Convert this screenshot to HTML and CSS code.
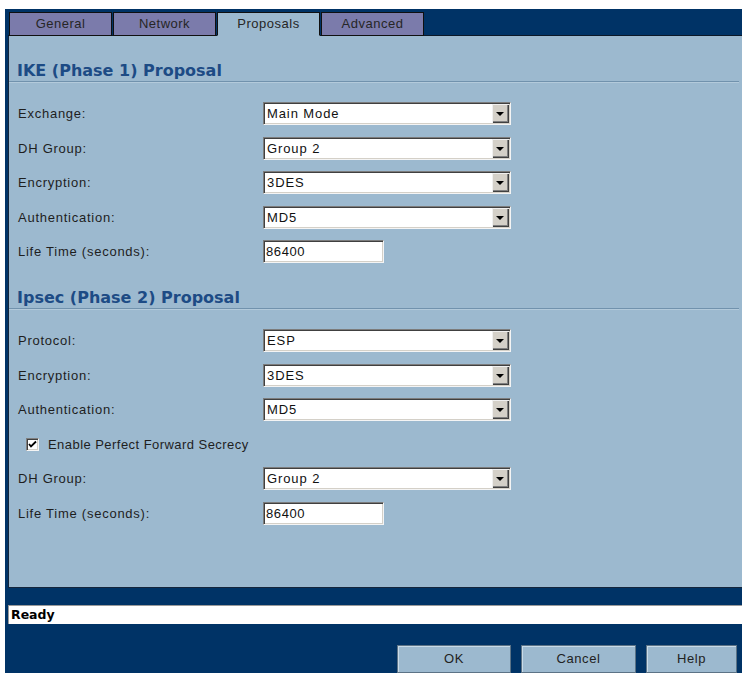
FILE: index.html
```html
<!DOCTYPE html>
<html lang="en">
<head>
<meta charset="utf-8">
<title>Proposals</title>
<link rel="stylesheet" href="styles.css">
</head>
<body>
<div class="app">
  <div class="tabs">
    <div class="tab">General</div>
    <div class="tab">Network</div>
    <div class="tab active">Proposals</div>
    <div class="tab">Advanced</div>
  </div>

  <div class="panel">
    <section class="section">
      <h2 class="section-title">IKE (Phase 1) Proposal</h2>
      <div class="rows">
        <div class="row"><span class="label">Exchange:</span><div class="select"><span class="value">Main Mode</span><span class="drop"></span></div></div>
        <div class="row"><span class="label">DH Group:</span><div class="select"><span class="value">Group 2</span><span class="drop"></span></div></div>
        <div class="row"><span class="label">Encryption:</span><div class="select"><span class="value">3DES</span><span class="drop"></span></div></div>
        <div class="row"><span class="label">Authentication:</span><div class="select"><span class="value">MD5</span><span class="drop"></span></div></div>
        <div class="row"><span class="label">Life Time (seconds):</span><div class="textbox">86400</div></div>
      </div>
    </section>

    <section class="section">
      <h2 class="section-title">Ipsec (Phase 2) Proposal</h2>
      <div class="rows">
        <div class="row"><span class="label">Protocol:</span><div class="select"><span class="value">ESP</span><span class="drop"></span></div></div>
        <div class="row"><span class="label">Encryption:</span><div class="select"><span class="value">3DES</span><span class="drop"></span></div></div>
        <div class="row"><span class="label">Authentication:</span><div class="select"><span class="value">MD5</span><span class="drop"></span></div></div>
        <div class="row check-row">
          <span class="checkbox"><svg width="9" height="9" viewBox="0 0 9 9"><path d="M1 4 L3 6.5 L8 1.5" fill="none" stroke="#000" stroke-width="1.8"/></svg></span>
          <span class="check-label">Enable Perfect Forward Secrecy</span>
        </div>
        <div class="row"><span class="label">DH Group:</span><div class="select"><span class="value">Group 2</span><span class="drop"></span></div></div>
        <div class="row"><span class="label">Life Time (seconds):</span><div class="textbox">86400</div></div>
      </div>
    </section>
  </div>

  <div class="status">Ready</div>

  <div class="actions">
    <button class="btn btn-ok">OK</button>
    <button class="btn btn-cancel">Cancel</button>
    <button class="btn btn-help">Help</button>
  </div>
</div>
</body>
</html>
```
FILE: styles.css
```css
html, body {
  margin: 0;
}

body {
  background: #ffffff;
  padding: 9px 0 0 5px;
  height: 673px;
  box-sizing: border-box;
  overflow: hidden;
  font-family: "Liberation Sans", Arial, sans-serif;
}

.app {
  background: #003366;
  height: 664px;
  box-sizing: border-box;
  padding: 3px 0 0 3px;
  display: flex;
  flex-direction: column;
}

/* tab strip */
.tabs {
  display: flex;
  gap: 1px;
  padding-left: 1px;
  height: 24px;
  box-sizing: border-box;
  border-bottom: 1px solid #0b1828;
}

.tab {
  width: 103px;
  height: 24px;
  box-sizing: border-box;
  border: 1px solid #101010;
  background: #7b7bab;
  color: #262626;
  font-size: 13px;
  letter-spacing: 0.5px;
  line-height: 21px;
  text-align: center;
}

.tab.active {
  background: #9cb9cf;
  border-bottom-color: #9cb9cf;
}

/* main panel */
.panel {
  background: #9cb9cf;
  height: 554px;
  box-sizing: border-box;
  border-left: 1px solid #14263c;
  border-bottom: 1px solid #14263c;
}

.section {
  margin-top: 25px;
}

.section-title {
  margin: 0 3px 0 0;
  padding-left: 8px;
  height: 21px;
  box-sizing: border-box;
  font-family: "DejaVu Sans", Verdana, sans-serif;
  font-size: 16px;
  font-weight: bold;
  line-height: 20px;
  color: #1d4b85;
  border-bottom: 1px solid #7192ad;
  box-shadow: 0 1px 0 #b3cadb;
}

.rows {
  padding-top: 20px;
  display: flex;
  flex-direction: column;
  gap: 11.5px;
}

.row {
  display: flex;
  align-items: center;
  height: 23px;
}

.label {
  width: 254px;
  padding-left: 9px;
  box-sizing: border-box;
  font-size: 13px;
  letter-spacing: 0.75px;
  color: #1e1e1e;
}

/* classic sunken dropdown */
.select {
  width: 248px;
  height: 23px;
  box-sizing: border-box;
  display: flex;
  background: #ffffff;
  border: 1px solid;
  border-color: #7c7c7c #f4f4f4 #f4f4f4 #7c7c7c;
  box-shadow: inset 1px 1px 0 #404040, inset -1px -1px 0 #d4d0c8;
  padding: 1px;
}

.value {
  flex: 1;
  padding-left: 2px;
  font-size: 13px;
  letter-spacing: 0.9px;
  line-height: 19px;
  color: #111;
}

.drop {
  width: 17px;
  height: 19px;
  box-sizing: border-box;
  background: #d4d0c8;
  box-shadow: inset 1px 1px 0 #f0f0f0, inset -1px -1px 0 #404040, inset -2px -2px 0 #808080;
  display: flex;
  align-items: center;
  justify-content: center;
}

.drop::after {
  content: "";
  width: 0;
  height: 0;
  border-left: 4px solid transparent;
  border-right: 4px solid transparent;
  border-top: 4px solid #000;
  margin: 1px 1px 0 0;
}

.textbox {
  width: 121px;
  height: 23px;
  box-sizing: border-box;
  background: #ffffff;
  border: 1px solid;
  border-color: #7c7c7c #f4f4f4 #f4f4f4 #7c7c7c;
  box-shadow: inset 1px 1px 0 #404040, inset -1px -1px 0 #d4d0c8;
  padding: 1px 0 0 2px;
  font-size: 13px;
  letter-spacing: 0.6px;
  line-height: 19px;
  color: #111;
}

/* checkbox row */
.check-row {
  padding-left: 17px;
}

.checkbox {
  width: 13px;
  height: 13px;
  box-sizing: border-box;
  background: #ffffff;
  border: 1px solid;
  border-color: #808080 #f4f4f4 #f4f4f4 #808080;
  box-shadow: inset 1px 1px 0 #404040, inset -1px -1px 0 #d4d0c8;
  display: flex;
  align-items: center;
  justify-content: center;
}

.checkbox svg {
  display: block;
}

.check-label {
  margin-left: 9px;
  font-size: 13px;
  letter-spacing: 0.45px;
  color: #1e1e1e;
}

/* status line */
.status {
  margin-top: 17px;
  height: 19px;
  box-sizing: border-box;
  background: #ffffff;
  border-top: 1px solid #9a9a9a;
  border-left: 1px solid #9a9a9a;
  padding-left: 2px;
  font-family: "DejaVu Sans", Tahoma, sans-serif;
  font-size: 12.5px;
  font-weight: bold;
  line-height: 17px;
  color: #000;
}

/* dialog buttons */
.actions {
  margin-top: 21px;
  display: flex;
  justify-content: flex-end;
  gap: 10px;
  padding-right: 5px;
}

.btn {
  height: 28px;
  box-sizing: border-box;
  margin: 0;
  padding: 0;
  background: #9cb9cf;
  border: 1px solid #5c7386;
  box-shadow: inset 1px 1px 0 #c9dbe8;
  font-family: "Liberation Sans", Arial, sans-serif;
  font-size: 13px;
  letter-spacing: 0.6px;
  color: #222;
  line-height: 26px;
}

.btn-ok { width: 114px; }
.btn-cancel { width: 115px; }
.btn-help { width: 91px; }
```
